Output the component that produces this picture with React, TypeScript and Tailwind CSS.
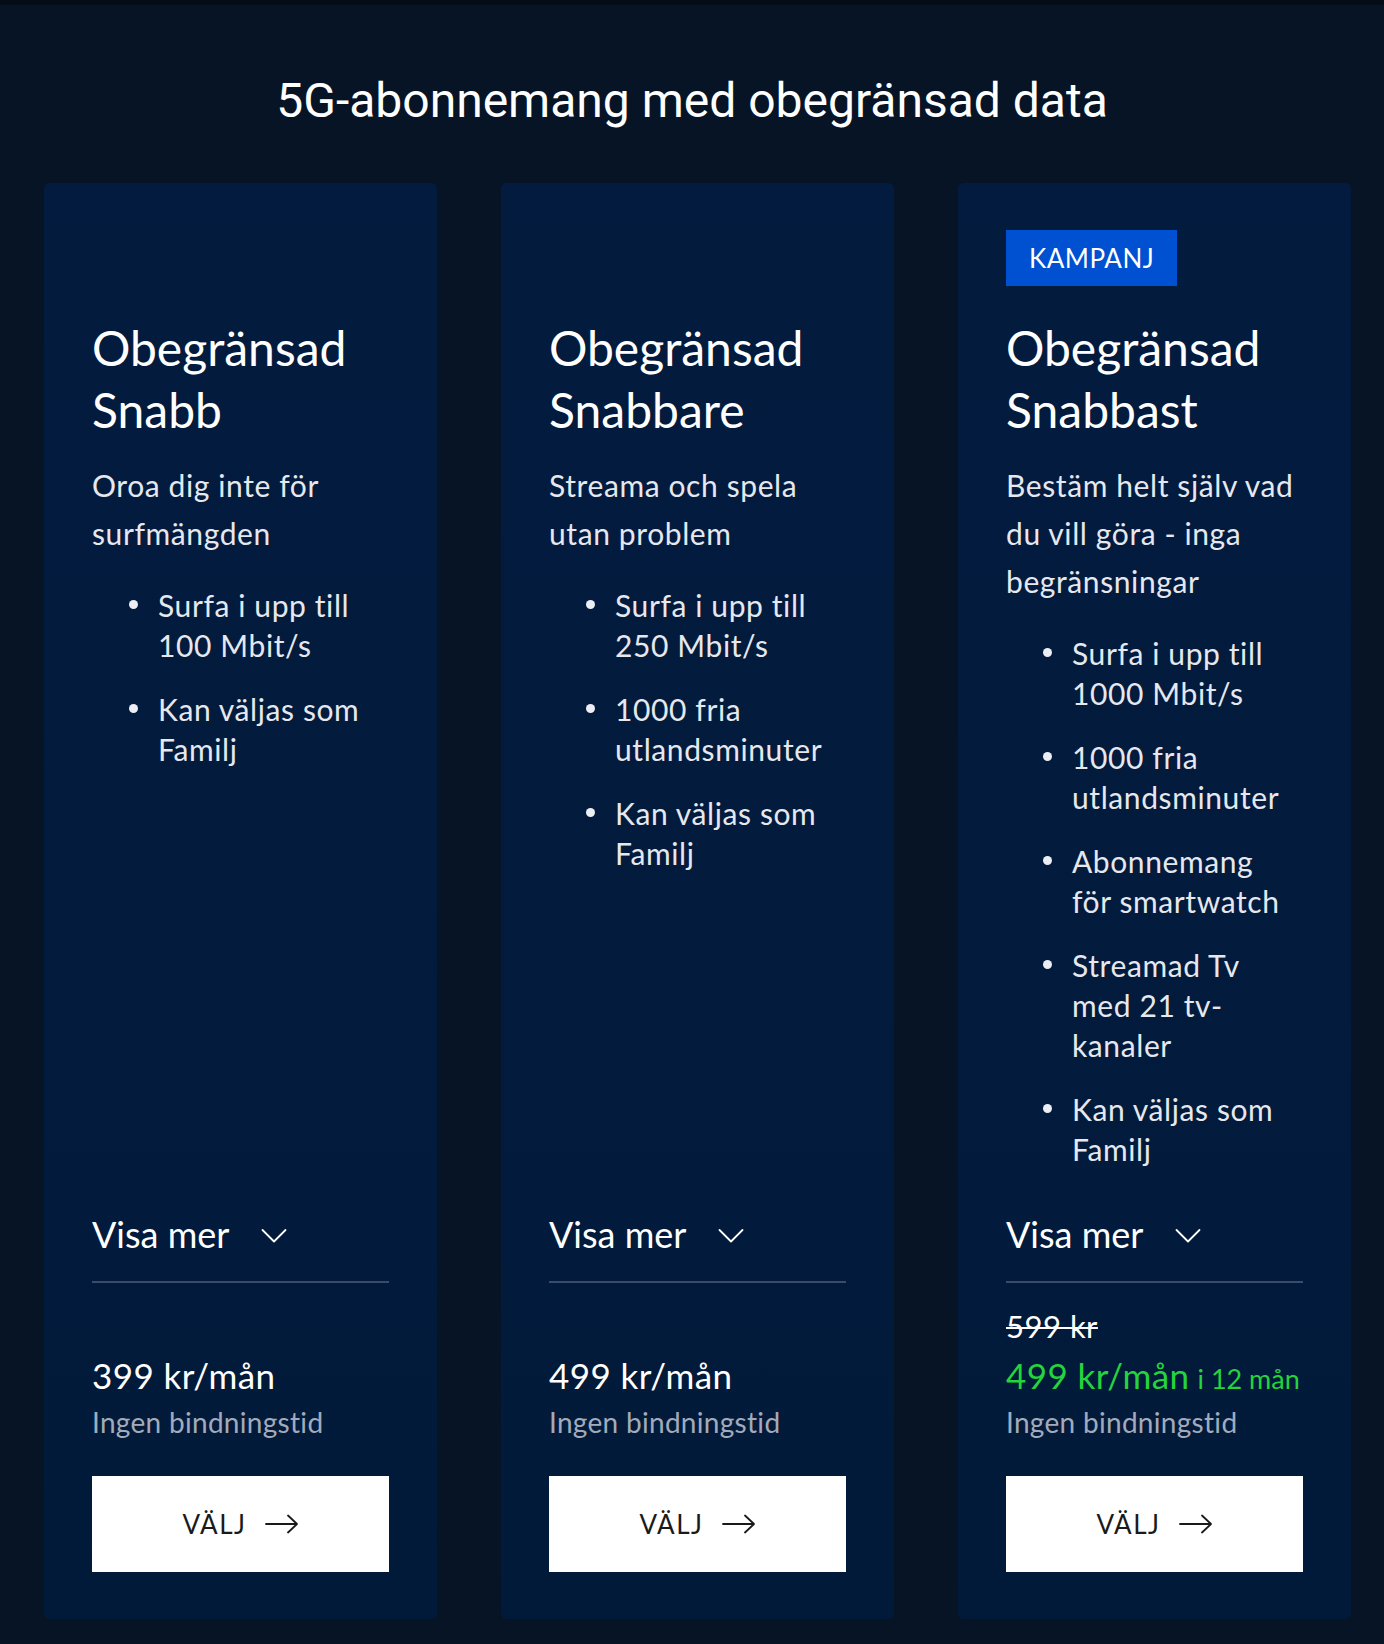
import type { ReactNode } from 'react';

interface Plan {
  badge?: string;
  name: [string, string];
  tagline: string;
  features: string[];
  oldPrice?: string;
  price: string;
  priceSuffix?: string;
}

const plans: Plan[] = [
  {
    name: ['Obegränsad', 'Snabb'],
    tagline: 'Oroa dig inte för surfmängden',
    features: ['Surfa i upp till 100 Mbit/s', 'Kan väljas som Familj'],
    price: '399 kr/mån',
  },
  {
    name: ['Obegränsad', 'Snabbare'],
    tagline: 'Streama och spela utan problem',
    features: ['Surfa i upp till 250 Mbit/s', '1000 fria utlandsminuter', 'Kan väljas som Familj'],
    price: '499 kr/mån',
  },
  {
    badge: 'KAMPANJ',
    name: ['Obegränsad', 'Snabbast'],
    tagline: 'Bestäm helt själv vad du vill göra - inga begränsningar',
    features: [
      'Surfa i upp till 1000 Mbit/s',
      '1000 fria utlandsminuter',
      'Abonnemang för smartwatch',
      'Streamad Tv med 21 tv-kanaler',
      'Kan väljas som Familj',
    ],
    oldPrice: '599 kr',
    price: '499 kr/mån',
    priceSuffix: 'i 12 mån',
  },
];

const ChevronDown = () => (
  <svg width="26" height="16" viewBox="0 0 26 16" fill="none" aria-hidden="true">
    <path d="M1.5 2 L13 13.5 L24.5 2" stroke="white" strokeWidth="1.8" strokeLinecap="round" strokeLinejoin="round" />
  </svg>
);

const ArrowRight = () => (
  <svg width="34" height="20" viewBox="0 0 34 20" fill="none" aria-hidden="true">
    <path d="M1 10 H32 M23 1.5 L32 10 L23 18.5" stroke="#1a1a1a" strokeWidth="1.8" strokeLinecap="round" strokeLinejoin="round" />
  </svg>
);

const Feature = ({ children }: { children: ReactNode }) => (
  <li className="flex items-start">
    <span className="ml-[37px] mt-[15px] h-[9px] w-[9px] shrink-0 rounded-full bg-[#eceef3]" />
    <span className="ml-[20px] max-w-[222px] text-[30px] leading-[40px] tracking-[0.6px] text-[#e6e8ee]">{children}</span>
  </li>
);

const PlanCard = ({ plan }: { plan: Plan }) => (
  <div className="flex min-h-[1436px] flex-col rounded-[6px] bg-gradient-to-b from-[#031b3e] to-[#021a3a] px-[48px] pb-[47px] pt-[47px]">
    <div className="h-[56px]">
      {plan.badge ? (
        <span className="inline-flex h-[56px] items-center bg-[#0050d2] px-[23px] text-[26px] tracking-[0.5px] text-white">
          {plan.badge}
        </span>
      ) : null}
    </div>

    <h2 className="mt-[31px] text-[48px] leading-[62px] text-white">
      {plan.name[0]}
      <br />
      {plan.name[1]}
    </h2>

    <p className="mt-[20px] text-[30px] leading-[48px] tracking-[0.6px] text-[#e6e8ee]">{plan.tagline}</p>

    <ul className="mt-[28px] flex flex-col gap-[24px]">
      {plan.features.map((feature) => (
        <Feature key={feature}>{feature}</Feature>
      ))}
    </ul>

    <div className="mt-auto pt-[36px]">
      <div className="flex items-center">
        <span className="text-[36px] leading-[48px] text-white">Visa mer</span>
        <span className="ml-[32px] mt-[4px]">
          <ChevronDown />
        </span>
      </div>
      <div className="mt-[23px] h-[2px] bg-[#3b4c68]" />

      <div
        className={
          plan.oldPrice
            ? 'mt-[23px] text-[31px] leading-[40px] tracking-[0.5px] text-white line-through decoration-[2px]'
            : 'invisible mt-[23px] text-[31px] leading-[40px]'
        }
      >
        {plan.oldPrice ?? '\u00a0'}
      </div>
      <div
        className={
          plan.priceSuffix
            ? 'mt-[5px] text-[35px] leading-[48px] tracking-[0.4px] text-[#25d33d]'
            : 'mt-[5px] text-[35px] leading-[48px] tracking-[0.4px] text-white'
        }
      >
        {plan.price}
        {plan.priceSuffix ? (
          <span className="ml-[8px] text-[27px] leading-none tracking-normal">{plan.priceSuffix}</span>
        ) : null}
      </div>
      <div className="mt-[5px] text-[28px] leading-[36px] tracking-[0.3px] text-[#a3abba]">Ingen bindningstid</div>

      <button
        type="button"
        className="mt-[36px] flex h-[96px] w-full items-center justify-center gap-[18px] bg-white text-[26px] tracking-[1.5px] text-[#1a1a1a]"
      >
        VÄLJ
        <ArrowRight />
      </button>
    </div>
  </div>
);

export default function App() {
  return (
    <div className="min-h-[1644px] w-full bg-[#061426] font-['Lato','Noto_Sans',sans-serif]">
      <div className="h-[5px] bg-[#030c17]" />
      <div className="pb-[25px] pl-[44px] pt-[67px]">
        <h1 className="pr-[44px] text-center font-['Roboto','Inter',sans-serif] text-[48px] leading-[58px] text-white">
          5G-abonnemang med obegränsad data
        </h1>
        <div className="mt-[53px] grid grid-cols-[repeat(3,393px)] gap-[64px]">
          {plans.map((plan) => (
            <PlanCard key={plan.name[1]} plan={plan} />
          ))}
        </div>
      </div>
    </div>
  );
}
